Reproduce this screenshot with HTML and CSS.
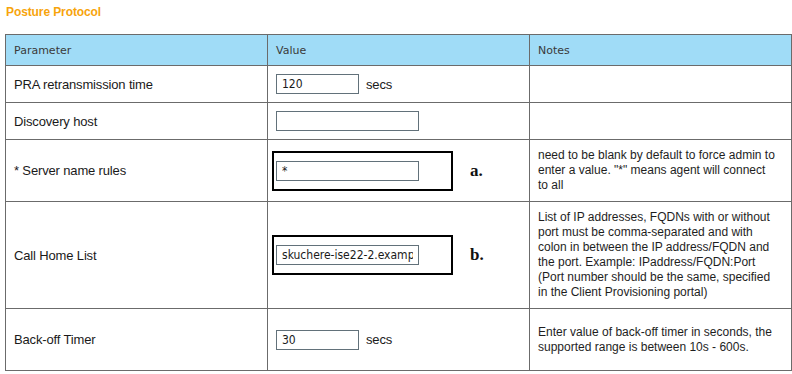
FILE: index.html
```html
<!DOCTYPE html>
<html lang="en">
<head>
  <meta charset="UTF-8">
  <meta name="viewport" content="width=device-width, initial-scale=1.0">
  <title>Posture Protocol</title>
  <link rel="stylesheet" href="styles.css">
</head>
<body>

  <!-- Section title -->
  <h2 class="section-title">Posture Protocol</h2>

  <!-- Settings table -->
  <table class="settings">
    <tr class="head-row">
      <th>Parameter</th>
      <th>Value</th>
      <th>Notes</th>
    </tr>
    <tr class="row-short">
      <td>PRA retransmission time</td>
      <td><input class="field field-small" type="text" value="120"><span class="unit">secs</span></td>
      <td></td>
    </tr>
    <tr class="row-short">
      <td>Discovery host</td>
      <td><input class="field" type="text" value=""></td>
      <td></td>
    </tr>
    <tr class="row-mid">
      <td>* Server name rules</td>
      <td>
        <div class="mark-wrap">
          <div class="mark-box"><input class="field" type="text" value="*"></div>
          <span class="mark-label">a.</span>
        </div>
      </td>
      <td class="note">need to be blank by default to force admin to<br>enter a value. "*" means agent will connect<br>to all</td>
    </tr>
    <tr class="row-tall">
      <td>Call Home List</td>
      <td>
        <div class="mark-wrap">
          <div class="mark-box"><input class="field" type="text" value="skuchere-ise22-2.example.com"></div>
          <span class="mark-label">b.</span>
        </div>
      </td>
      <td class="note">List of IP addresses, FQDNs with or without<br>port must be comma-separated and with<br>colon in between the IP address/FQDN and<br>the port. Example: IPaddress/FQDN:Port<br>(Port number should be the same, specified<br>in the Client Provisioning portal)</td>
    </tr>
    <tr class="row-mid">
      <td>Back-off Timer</td>
      <td><input class="field field-small" type="text" value="30"><span class="unit">secs</span></td>
      <td class="note">Enter value of back-off timer in seconds, the<br>supported range is between 10s - 600s.</td>
    </tr>
  </table>

</body>
</html>
```

FILE: styles.css
```css
* {
  margin: 0;
  padding: 0;
  box-sizing: border-box;
}

body {
  background: #ffffff;
  color: #1a1a1a;
  font-family: 'Liberation Sans', Arial, sans-serif;
  font-size: 13px;
  letter-spacing: -0.15px;
}

.section-title {
  font-family: 'Liberation Sans', Arial, sans-serif;
  font-size: 12px;
  font-weight: bold;
  letter-spacing: -0.1px;
  color: #f7a40c;
  line-height: 14px;
  padding: 5px 0 0 6px;
  height: 34px;
}

.settings {
  margin-left: 5px;
  width: 787px;
  border-collapse: collapse;
  table-layout: fixed;
}

.settings th,
.settings td {
  border: 1px solid #6b6b6b;
  padding: 0 8px;
  vertical-align: middle;
  text-align: left;
}

.settings th {
  background: #a0dcf7;
  font-family: 'DejaVu Sans', Verdana, sans-serif;
  font-size: 11px;
  font-weight: normal;
  letter-spacing: 0;
  color: #3a3a3a;
  height: 31px;
}

.row-short td {
  height: 37px;
}

.row-mid td {
  height: 62px;
}

.row-tall td {
  height: 107px;
}

.settings .note {
  font-size: 12px;
  letter-spacing: 0;
  line-height: 15px;
  white-space: nowrap;
  color: #1e1e1e;
}

.field {
  width: 143px;
  height: 20px;
  border: 1px solid #62717a;
  padding: 0 5px;
  font-family: 'DejaVu Sans Condensed', 'DejaVu Sans', sans-serif;
  font-size: 12px;
  letter-spacing: 0;
  color: #1a1a1a;
  vertical-align: middle;
  outline: none;
}

.field-small {
  width: 83px;
}

.unit {
  margin-left: 7px;
  vertical-align: middle;
}

/* annotation boxes drawn over the form */
.mark-wrap {
  display: flex;
  align-items: center;
  margin-left: -4px;
}

.mark-box {
  width: 181px;
  height: 40px;
  border: 2px solid #000;
  padding: 8px 0 0 2px;
}

.mark-label {
  font-family: 'Liberation Serif', 'Times New Roman', serif;
  font-weight: bold;
  font-size: 17px;
  letter-spacing: 0;
  color: #111;
  margin-left: 17px;
}
```
